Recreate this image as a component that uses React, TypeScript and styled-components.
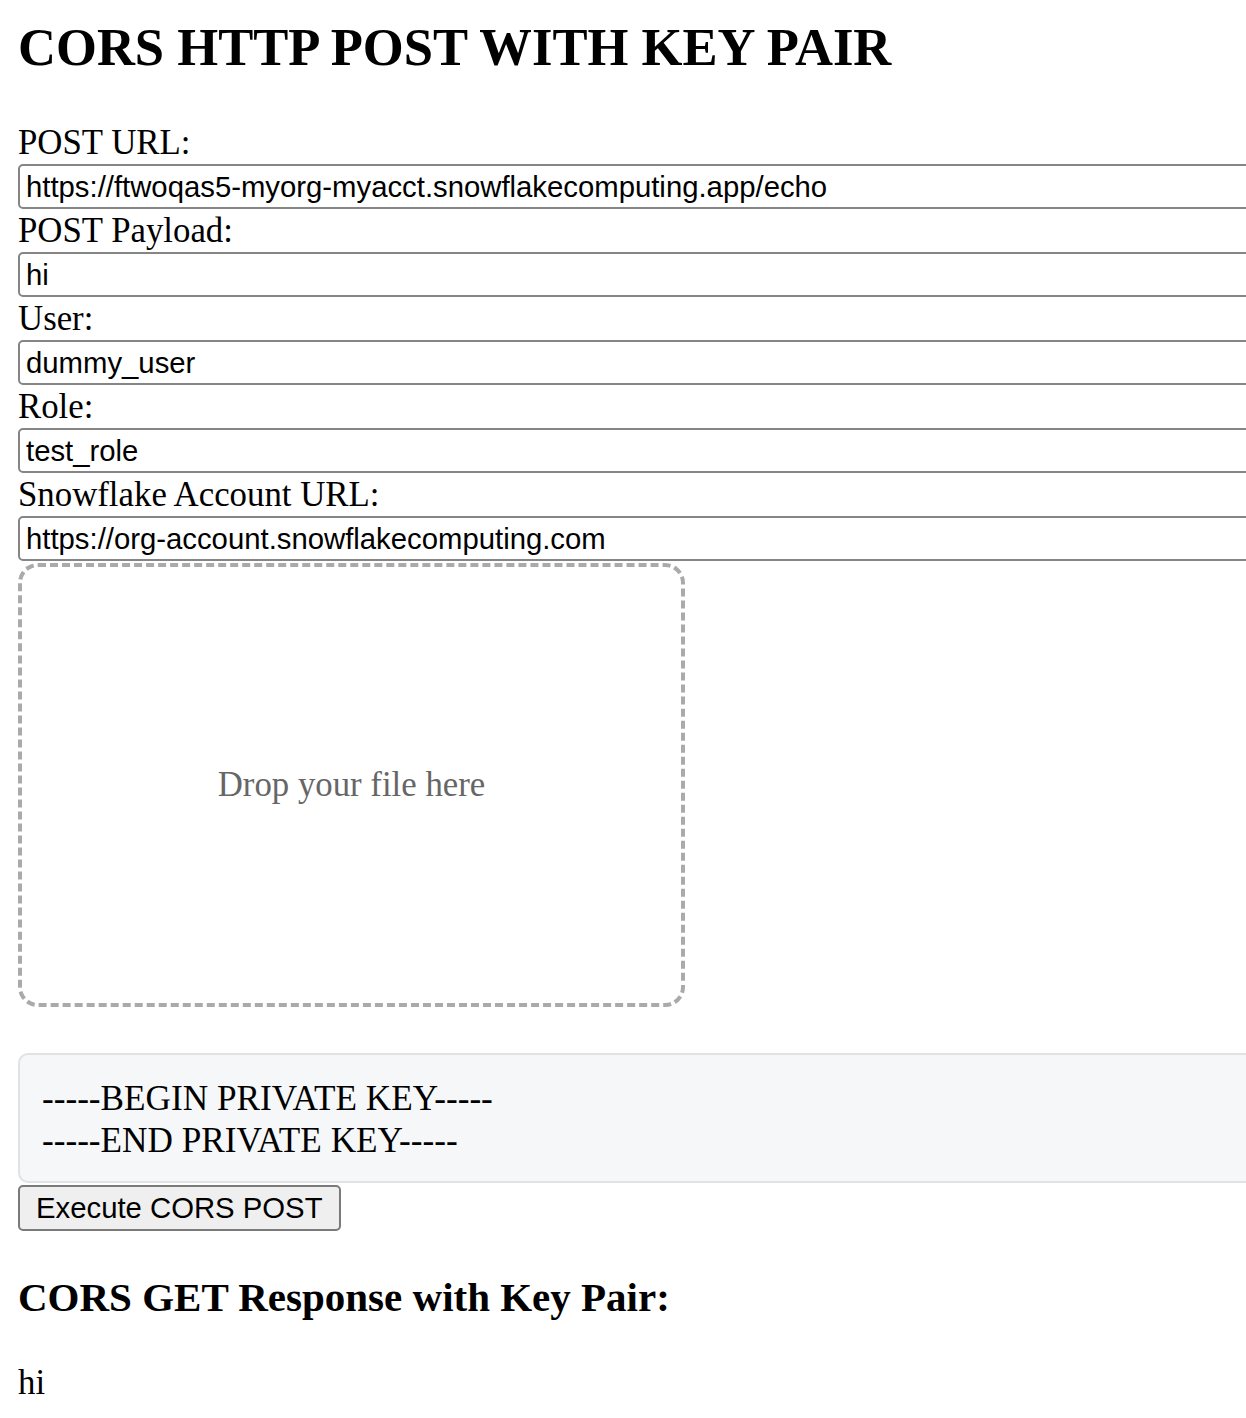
import React, { FC, useState } from 'react';
import styled, { createGlobalStyle } from 'styled-components';

const GlobalStyle = createGlobalStyle`
  html, body {
    margin: 0;
    padding: 0;
    background: #fff;
    overflow-x: hidden;
  }
`;

const Page = styled.div`
  padding: 17px 0 20px 18px;
  font-family: 'Liberation Serif', 'Times New Roman', serif;
  font-size: 34.8px;
  color: #000;
  overflow: hidden;
`;

const Title = styled.h1`
  margin: 0 0 43px;
  font-size: 52.6px;
  line-height: 61px;
  font-weight: bold;
`;

const Form = styled.form`
  display: flex;
  flex-direction: column;
  align-items: flex-start;
`;

const Label = styled.label`
  display: block;
  line-height: 43px;
  height: 43px;
`;

const Input = styled.input`
  box-sizing: border-box;
  width: 1280px;
  height: 45px;
  margin: 0;
  padding: 0 6px;
  border: 2px solid #858585;
  border-radius: 5px;
  font-family: 'Liberation Sans', Arial, sans-serif;
  font-size: 29.3px;
  color: #000;
  background: #fff;
  outline: none;
`;

const DropZone = styled.div`
  box-sizing: border-box;
  width: 667px;
  height: 444px;
  margin-top: 2px;
  border: 4px dashed #aaa;
  border-radius: 20px;
  display: flex;
  align-items: center;
  justify-content: center;
  color: #666;
`;

const KeyBox = styled.div`
  box-sizing: border-box;
  width: 1280px;
  height: 130px;
  margin-top: 46px;
  padding: 23px 22px 19px;
  border: 2px solid #e2e2e2;
  border-radius: 10px;
  background: #f6f7f9;
  font-size: 35.2px;
  line-height: 42px;
  white-space: pre;
`;

const Button = styled.button`
  box-sizing: border-box;
  height: 46px;
  margin-top: 2px;
  padding: 0 16px;
  border: 2px solid #7a7a7a;
  border-radius: 5px;
  background: #efefef;
  font-family: 'Liberation Sans', Arial, sans-serif;
  font-size: 29.3px;
  color: #000;
  cursor: pointer;
`;

const SubTitle = styled.h3`
  margin: 43px 0 43px;
  font-size: 41px;
  line-height: 46px;
  font-weight: bold;
`;

const Response = styled.p`
  margin: 0;
  line-height: 40px;
`;

interface IField {
  label: string;
  value: string;
}

const fields: IField[] = [
  { label: 'POST URL:', value: 'https://ftwoqas5-myorg-myacct.snowflakecomputing.app/echo' },
  { label: 'POST Payload:', value: 'hi' },
  { label: 'User:', value: 'dummy_user' },
  { label: 'Role:', value: 'test_role' },
  { label: 'Snowflake Account URL:', value: 'https://org-account.snowflakecomputing.com' },
];

const App: FC = () => {
  const [values, setValues] = useState(fields.map((f) => f.value));

  const handleChange = (i: number, v: string) => {
    setValues((prev) => prev.map((p, idx) => (idx === i ? v : p)));
  };

  return (
    <>
      <GlobalStyle />
      <Page>
        <Title>CORS HTTP POST WITH KEY PAIR</Title>
        <Form onSubmit={(e) => e.preventDefault()}>
          {fields.map((f, i) => (
            <React.Fragment key={f.label}>
              <Label>{f.label}</Label>
              <Input value={values[i]} onChange={(e) => handleChange(i, e.target.value)} />
            </React.Fragment>
          ))}
          <DropZone>Drop your file here</DropZone>
          <KeyBox>{'-----BEGIN PRIVATE KEY-----\n-----END PRIVATE KEY-----'}</KeyBox>
          <Button type="submit">Execute CORS POST</Button>
        </Form>
        <SubTitle>CORS GET Response with Key Pair:</SubTitle>
        <Response>hi</Response>
      </Page>
    </>
  );
};

export default App;
